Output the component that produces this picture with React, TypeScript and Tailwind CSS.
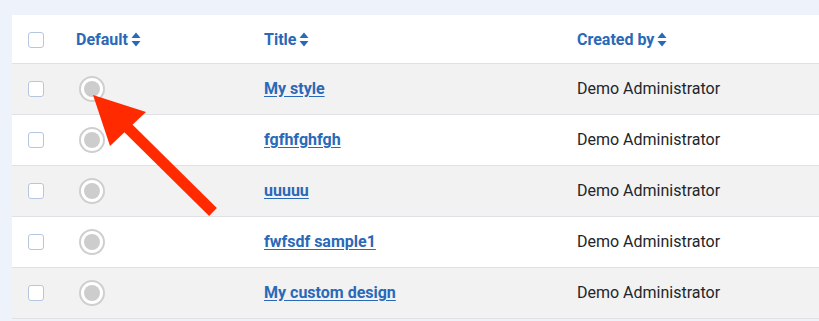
import React from "react";

type Row = { title: string };

const rows: Row[] = [
  { title: "My style" },
  { title: "fgfhfghfgh" },
  { title: "uuuuu" },
  { title: "fwfsdf sample1" },
  { title: "My custom design" },
];

function SortIcon() {
  return (
    <svg width="10" height="15" viewBox="0 0 10 15" className="ml-[3px] inline-block">
      <path d="M5 0.5 L9.5 6 H0.5 Z" fill="currentColor" />
      <path d="M5 14.5 L9.5 9 H0.5 Z" fill="currentColor" />
    </svg>
  );
}

function Checkbox() {
  return (
    <span className="block h-4 w-4 rounded-[3px] border border-[#b6c6e0] bg-white" />
  );
}

function Radio() {
  return (
    <span className="flex h-[26px] w-[26px] items-center justify-center rounded-full border-2 border-[#cfcfcf] bg-white">
      <span className="h-4 w-4 rounded-full bg-[#cdcdcd]" />
    </span>
  );
}

export default function App() {
  return (
    <div
      className="relative h-[321px] w-[819px] overflow-hidden bg-[#eef3fb] pt-[15px] pl-3"
      style={{ fontFamily: "Roboto, 'Liberation Sans', sans-serif" }}
    >
      <div className="w-[820px] bg-white">
        <div className="grid h-[49px] grid-cols-[64px_188px_313px_1fr] items-center border-b border-[#dfe1e5] pt-[1px] text-[16px] font-bold text-[#2a69b8]">
          <div className="pl-4">
            <Checkbox />
          </div>
          <div className="flex items-center">
            Default
            <SortIcon />
          </div>
          <div className="flex items-center">
            Title
            <SortIcon />
          </div>
          <div className="flex items-center">
            Created by
            <SortIcon />
          </div>
        </div>

        {rows.map((row, i) => (
          <div
            key={row.title}
            className={`grid h-[51px] grid-cols-[64px_188px_313px_1fr] items-center border-b border-[#dfe1e5] text-[16px] ${
              i % 2 === 0 ? "bg-[#f2f2f2]" : "bg-white"
            }`}
          >
            <div className="pl-4">
              <Checkbox />
            </div>
            <div className="pl-[3px]">
              <Radio />
            </div>
            <div>
              <a className="font-bold text-[#2a69b8] underline underline-offset-2">{row.title}</a>
            </div>
            <div className="text-[#22262a]">Demo Administrator</div>
          </div>
        ))}
      </div>

      <svg
        className="absolute left-0 top-0"
        width="819"
        height="321"
        viewBox="0 0 819 321"
      >
        <line x1="128" y1="128" x2="213" y2="212" stroke="#ff2a00" strokeWidth="11" />
        <polygon points="93,95 146,112 110,146" fill="#ff2a00" />
      </svg>
    </div>
  );
}
